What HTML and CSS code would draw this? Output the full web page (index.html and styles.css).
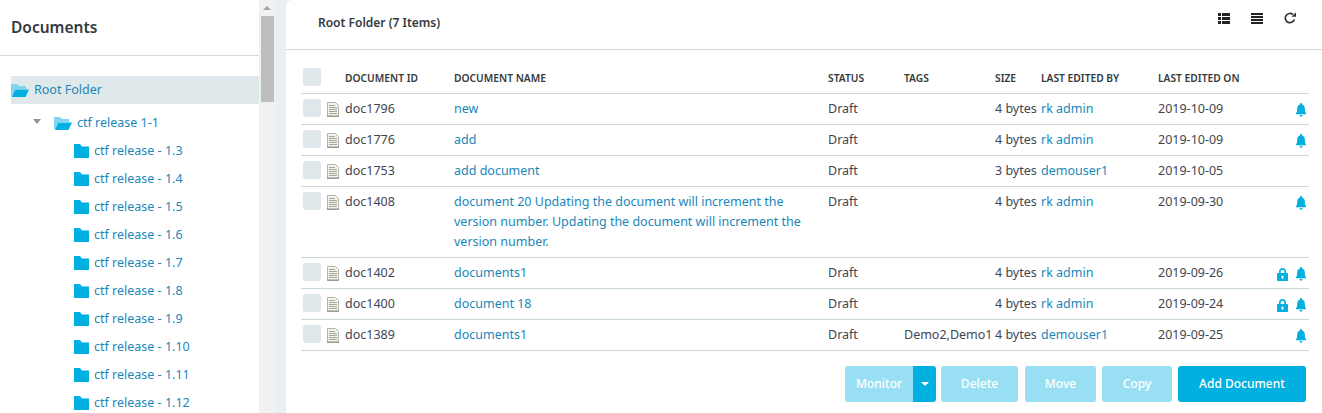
FILE: index.html
```html
<!DOCTYPE html>
<html lang="en">
<head>
    <meta charset="UTF-8">
    <title>Documents</title>
    <link rel="stylesheet" href="styles.css">
</head>
<body>
    <svg class="defs" width="0" height="0">
        <symbol id="folder" viewBox="0 0 15 14"><path d="M0 0h6l2 2.500h7V14H0z"/></symbol>
        <symbol id="folder-open" viewBox="0 0 18 13"><path fill="#80d6ef" d="M0 0h6l2 2h7v3H5L1 12H0z"/><path fill="#00b0e0" d="M4.500 5.500H18L14.500 13H.8z"/></symbol>
        <symbol id="bell" viewBox="0 0 10 14"><path d="M5 0c.6 0 1 .4 1 1v.6c1.800.4 2.800 2 2.800 3.900 0 2.500.4 3.600 1.200 4.800v.9H0v-.9c.8-1.200 1.200-2.300 1.200-4.800C1.200 3.600 2.200 2 4 1.600V1c0-.6.4-1 1-1zM3.500 12h3c0 1-.7 1.700-1.500 1.700S3.500 13 3.500 12z"/></symbol>
        <symbol id="lock" viewBox="0 0 11 13"><path fill-rule="evenodd" d="M2 5V3.500C2 1.500 3.500 0 5.500 0S9 1.500 9 3.500V5h1c.6 0 1 .4 1 1v6c0 .6-.4 1-1 1H1c-.6 0-1-.4-1-1V6c0-.6.4-1 1-1zm1.700 0h3.600V3.500c0-1-.8-1.800-1.800-1.800s-1.800.8-1.800 1.800zM5.500 7.500a1.200 1.200 0 0 0-.6 2.200V11h1.200V9.700a1.200 1.200 0 0 0-.6-2.200z"/></symbol>
        <symbol id="doc" viewBox="0 0 12 15"><path fill="#f3f4ee" stroke="#b3b5a9" d="M.5.500h8l3 3v11H.5z"/><path stroke="#a4a69a" d="M2 3.500h6M2 5.500h8M2 7.500h8M2 9.500h8M2 11.500h8"/><path fill="#73766a" d="M0 13h12v2H0z" opacity=".4"/></symbol>
    </svg>

    <div class="page">
        <aside class="sidebar">
            <h2 class="sidebar-title">Documents</h2>
            <div class="tree">
                <a class="tree-root"><svg class="ico-open"><use href="#folder-open"/></svg>Root Folder</a>
                <a class="tree-parent"><span class="caret"></span><svg class="ico-open"><use href="#folder-open"/></svg>ctf release 1-1</a>
                <a class="tree-item"><svg class="ico-folder"><use href="#folder"/></svg>ctf release - 1.3</a>
                <a class="tree-item"><svg class="ico-folder"><use href="#folder"/></svg>ctf release - 1.4</a>
                <a class="tree-item"><svg class="ico-folder"><use href="#folder"/></svg>ctf release - 1.5</a>
                <a class="tree-item"><svg class="ico-folder"><use href="#folder"/></svg>ctf release - 1.6</a>
                <a class="tree-item"><svg class="ico-folder"><use href="#folder"/></svg>ctf release - 1.7</a>
                <a class="tree-item"><svg class="ico-folder"><use href="#folder"/></svg>ctf release - 1.8</a>
                <a class="tree-item"><svg class="ico-folder"><use href="#folder"/></svg>ctf release - 1.9</a>
                <a class="tree-item"><svg class="ico-folder"><use href="#folder"/></svg>ctf release - 1.10</a>
                <a class="tree-item"><svg class="ico-folder"><use href="#folder"/></svg>ctf release - 1.11</a>
                <a class="tree-item"><svg class="ico-folder"><use href="#folder"/></svg>ctf release - 1.12</a>
            </div>
        </aside>

        <div class="scrollbar">
            <span class="scroll-up"></span>
            <span class="scroll-thumb"></span>
        </div>

        <main class="content">
            <header class="content-head">
                <h3 class="content-title">Root Folder (7 Items)</h3>
                <div class="view-tools">
                    <svg class="tool" viewBox="0 0 12 11"><path d="M0 0h3v3H0zM4 0h8v3H4zM0 4h3v3H0zM4 4h8v3H4zM0 8h3v3H0zM4 8h8v3H4z"/></svg>
                    <svg class="tool" viewBox="0 0 12 11"><path d="M0 0h12v2H0zM0 3h12v2H0zM0 6h12v2H0zM0 9h12v2H0z"/></svg>
                    <svg class="tool tool-refresh" viewBox="0 0 12 12"><path fill="none" stroke="#333" stroke-width="1.700" d="M10.300 7.500A4.600 4.600 0 1 1 9 2.600"/><path fill="#333" d="M7.500 4.800H12V.3z"/></svg>
                </div>
            </header>

            <table class="docs">
                <colgroup>
                    <col class="c-check"><col class="c-id"><col class="c-name"><col class="c-status"><col class="c-tags"><col class="c-size"><col class="c-by"><col class="c-on"><col class="c-flags">
                </colgroup>
                <thead>
                    <tr>
                        <th><span class="check"></span></th>
                        <th>DOCUMENT ID</th>
                        <th>DOCUMENT NAME</th>
                        <th>STATUS</th>
                        <th>TAGS</th>
                        <th>SIZE</th>
                        <th>LAST EDITED BY</th>
                        <th>LAST EDITED ON</th>
                        <th></th>
                    </tr>
                </thead>
                <tbody>
                    <tr>
                        <td><span class="check"></span><svg class="doc-ico"><use href="#doc"/></svg></td>
                        <td>doc1796</td><td><a>new</a></td><td>Draft</td><td></td><td>4 bytes</td><td><a>rk admin</a></td><td>2019-10-09</td>
                        <td class="flags"><svg class="bell"><use href="#bell"/></svg></td>
                    </tr>
                    <tr>
                        <td><span class="check"></span><svg class="doc-ico"><use href="#doc"/></svg></td>
                        <td>doc1776</td><td><a>add</a></td><td>Draft</td><td></td><td>4 bytes</td><td><a>rk admin</a></td><td>2019-10-09</td>
                        <td class="flags"><svg class="bell"><use href="#bell"/></svg></td>
                    </tr>
                    <tr>
                        <td><span class="check"></span><svg class="doc-ico"><use href="#doc"/></svg></td>
                        <td>doc1753</td><td><a>add document</a></td><td>Draft</td><td></td><td>3 bytes</td><td><a>demouser1</a></td><td>2019-10-05</td>
                        <td class="flags"></td>
                    </tr>
                    <tr>
                        <td><span class="check"></span><svg class="doc-ico"><use href="#doc"/></svg></td>
                        <td>doc1408</td><td><a>document 20 Updating the document will increment the version number. Updating the document will increment the version number.</a></td><td>Draft</td><td></td><td>4 bytes</td><td><a>rk admin</a></td><td>2019-09-30</td>
                        <td class="flags"><svg class="bell"><use href="#bell"/></svg></td>
                    </tr>
                    <tr>
                        <td><span class="check"></span><svg class="doc-ico"><use href="#doc"/></svg></td>
                        <td>doc1402</td><td><a>documents1</a></td><td>Draft</td><td></td><td>4 bytes</td><td><a>rk admin</a></td><td>2019-09-26</td>
                        <td class="flags"><svg class="lock"><use href="#lock"/></svg><svg class="bell"><use href="#bell"/></svg></td>
                    </tr>
                    <tr>
                        <td><span class="check"></span><svg class="doc-ico"><use href="#doc"/></svg></td>
                        <td>doc1400</td><td><a>document 18</a></td><td>Draft</td><td></td><td>4 bytes</td><td><a>rk admin</a></td><td>2019-09-24</td>
                        <td class="flags"><svg class="lock"><use href="#lock"/></svg><svg class="bell"><use href="#bell"/></svg></td>
                    </tr>
                    <tr>
                        <td><span class="check"></span><svg class="doc-ico"><use href="#doc"/></svg></td>
                        <td>doc1389</td><td><a>documents1</a></td><td>Draft</td><td>Demo2,Demo1</td><td>4 bytes</td><td><a>demouser1</a></td><td>2019-09-25</td>
                        <td class="flags"><svg class="bell"><use href="#bell"/></svg></td>
                    </tr>
                </tbody>
            </table>

            <div class="actions">
                <div class="split">
                    <button class="btn btn-off btn-monitor">Monitor</button><button class="btn btn-caret"><span class="caret-white"></span></button>
                </div>
                <button class="btn btn-off btn-delete">Delete</button>
                <button class="btn btn-off btn-move">Move</button>
                <button class="btn btn-off btn-copy">Copy</button>
                <button class="btn btn-add">Add Document</button>
            </div>
        </main>
    </div>
</body>
</html>
```

FILE: styles.css
```css
html, body {
    margin: 0;
    height: 413px;
    overflow: hidden;
}

body {
    font-family: "Noto Sans", "Open Sans", sans-serif;
    font-size: 12.5px;
    line-height: 20px;
    color: #3f4650;
    background: #e8f0f3;
}

a {
    color: #1a87b9;
    text-decoration: none;
}

.defs {
    position: absolute;
}

.page {
    display: flex;
    height: 413px;
}

/* left tree */
.sidebar {
    width: 259px;
    flex: none;
    background: #fff;
    overflow: hidden;
}

.sidebar-title {
    margin: 0;
    height: 55px;
    padding: 0 0 0 11px;
    font-size: 15.5px;
    font-weight: 600;
    line-height: 54px;
    color: #343a40;
    border-bottom: 1px solid #d0dadc;
}

.tree {
    padding: 20px 0 0 11px;
}

.tree a {
    display: flex;
    align-items: center;
    height: 28px;
}

.tree-root {
    background: #dfe9eb;
    margin-bottom: 5px;
}

.ico-open {
    width: 18px;
    height: 13px;
    margin-right: 5px;
}

.tree-parent {
    padding-left: 22px;
}

.caret {
    width: 0;
    height: 0;
    border-left: 4px solid transparent;
    border-right: 4px solid transparent;
    border-top: 5px solid #8c979b;
    margin: -4px 13px 0 0;
}

.tree-item {
    padding-left: 63px;
}

.ico-folder {
    width: 15px;
    height: 14px;
    margin-right: 5px;
    fill: #00b0e0;
}

/* fake browser scrollbar */
.scrollbar {
    width: 16px;
    flex: none;
    background: #f1f1f1;
    display: flex;
    flex-direction: column;
    align-items: center;
}

.scroll-up {
    margin-top: 6px;
    border-left: 4px solid transparent;
    border-right: 4px solid transparent;
    border-bottom: 4px solid #a3a3a3;
}

.scroll-thumb {
    width: 13px;
    height: 86px;
    margin-top: 6px;
    background: #bdbdbd;
}

/* main panel */
.content {
    flex: 1;
    margin-left: 11px;
    background: #fff;
    border-top-left-radius: 6px;
    min-width: 0;
}

.content-head {
    display: flex;
    justify-content: space-between;
    height: 49px;
    padding: 0 26px 0 32px;
    border-bottom: 1px solid #d0dadc;
}

.content-title {
    margin: 0;
    font-size: 12px;
    font-weight: 600;
    line-height: 45px;
    color: #343a40;
}

.view-tools {
    display: flex;
    gap: 21px;
    padding-top: 13px;
}

.tool {
    width: 12px;
    height: 11px;
    fill: #222;
}

.tool-refresh {
    height: 12px;
    margin-top: -1px;
}

.docs {
    width: 1008px;
    margin: 15px 0 0 15px;
    border-collapse: collapse;
    table-layout: fixed;
}

.c-check { width: 44px; }
.c-id { width: 109px; }
.c-name { width: 374px; }
.c-status { width: 76px; }
.c-tags { width: 91px; }
.c-size { width: 46px; }
.c-by { width: 117px; }
.c-on { width: 100px; }
.c-flags { width: 51px; }

.docs th {
    height: 25px;
    padding: 0 0 3px;
    font-size: 10.25px;
    font-weight: 600;
    line-height: 20px;
    text-align: left;
    color: #343a40;
    white-space: nowrap;
    border-bottom: 1px solid #c9d8dc;
}

.docs td {
    height: 30px;
    padding: 5px 0;
    box-sizing: border-box;
    vertical-align: top;
    white-space: nowrap;
    border-bottom: 1px solid #c9d8dc;
}

.docs td:nth-child(3) {
    white-space: normal;
    padding-right: 20px;
}

.docs td:first-child {
    padding: 5px 0 0 2px;
}

.docs th:first-child {
    padding-left: 2px;
}

.check {
    display: inline-block;
    width: 18px;
    height: 18px;
    vertical-align: top;
    background: #dfe7ea;
    border-radius: 3px;
}

.doc-ico {
    width: 12px;
    height: 15px;
    margin: 3px 0 0 6px;
    vertical-align: top;
}

.flags {
    text-align: right;
    padding-right: 3px !important;
}

.bell {
    width: 10px;
    height: 14px;
    margin-top: 4px;
    fill: #00b0e0;
    vertical-align: top;
}

.lock {
    width: 11px;
    height: 13px;
    margin: 5px 8px 0 0;
    fill: #00b0e0;
    vertical-align: top;
}

/* bottom buttons */
.actions {
    display: flex;
    justify-content: flex-end;
    margin-top: 15px;
    padding-right: 16px;
}

.btn {
    height: 36px;
    padding: 0 0 2px;
    border: 0;
    border-radius: 3px;
    font: 500 12px "Noto Sans", sans-serif;
    color: #fff;
    background: #00b0e0;
}

.btn-off {
    background: #99dff3;
}

.split {
    display: flex;
}

.btn-monitor {
    width: 68px;
    border-radius: 3px 0 0 3px;
}

.btn-caret {
    width: 23px;
    border-radius: 0 3px 3px 0;
}

.caret-white {
    display: inline-block;
    border-left: 4px solid transparent;
    border-right: 4px solid transparent;
    border-top: 4px solid #fff;
    vertical-align: middle;
}

.btn-delete { width: 77px; margin-left: 5px; }
.btn-move { width: 71px; margin-left: 7px; }
.btn-copy { width: 70px; margin-left: 6px; }
.btn-add { width: 128px; margin-left: 6px; }
```
